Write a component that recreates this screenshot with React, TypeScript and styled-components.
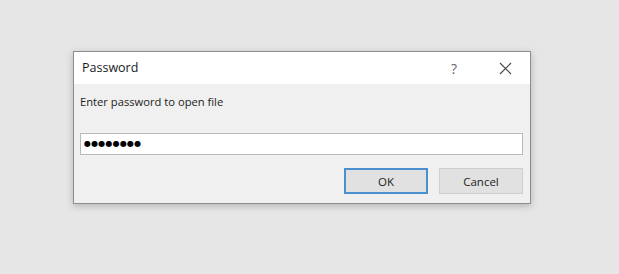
import styled, { createGlobalStyle } from "styled-components";

const GlobalStyle = createGlobalStyle`
  html, body {
    margin: 0;
    padding: 0;
    background: #e6e6e6;
    font-family: "Open Sans", "Noto Sans", Arial, sans-serif;
  }
`;

const Page = styled.div`
  width: 619px;
  height: 274px;
  padding: 51px 0 0 73px;
  box-sizing: border-box;
`;

const Dialog = styled.div`
  width: 458px;
  height: 153px;
  box-sizing: border-box;
  border: 1px solid #8e8e8e;
  background: #f0f0f0;
  box-shadow: 0 2px 7px rgba(0, 0, 0, 0.22);
  display: flex;
  flex-direction: column;
`;

const TitleBar = styled.div`
  height: 32px;
  background: #ffffff;
  display: flex;
  align-items: center;
  padding-left: 8px;
`;

const Title = styled.span`
  flex: 1;
  font-size: 12.5px;
  color: #1a1a1a;
  margin-bottom: 1px;
`;

const TitleButton = styled.button<{ $w: number }>`
  width: ${(p) => p.$w}px;
  height: 32px;
  border: none;
  background: transparent;
  padding: 0;
  display: flex;
  align-items: center;
  justify-content: center;
  color: #666;
  font-family: inherit;
  font-size: 14px;
`;

const Body = styled.div`
  flex: 1;
  padding: 10px 7px 0 6px;
  display: flex;
  flex-direction: column;
`;

const Label = styled.div`
  font-size: 11.2px;
  color: #222;
  height: 16px;
  line-height: 16px;
`;

const Field = styled.div`
  margin-top: 23px;
  height: 22px;
  box-sizing: border-box;
  border: 1px solid #b9b9b9;
  background: #fff;
  display: flex;
  align-items: center;
  padding-left: 3px;
`;

const Dots = styled.span`
  font-family: "DejaVu Sans", sans-serif;
  font-size: 8px;
  letter-spacing: 0.2px;
  color: #000;
  line-height: 1;
`;

const Buttons = styled.div`
  margin-top: 13px;
  display: flex;
  justify-content: flex-end;
  gap: 11px;
`;

const Button = styled.button<{ $primary?: boolean }>`
  width: 84px;
  height: 26px;
  box-sizing: border-box;
  border: ${(p) => (p.$primary ? "2px solid #4a90d0" : "1px solid #cfcfcf")};
  background: #e1e1e1;
  font-family: inherit;
  font-size: 11.5px;
  color: #222;
  padding: 0;
`;

export default function App() {
  return (
    <>
      <GlobalStyle />
      <Page>
        <Dialog>
          <TitleBar>
            <Title>Password</Title>
            <TitleButton $w={52} aria-label="Help">?</TitleButton>
            <TitleButton $w={50} aria-label="Close">
              <svg width="13" height="13" viewBox="0 0 13 13">
                <path d="M1 1L12 12M12 1L1 12" stroke="#444" strokeWidth="1.1" />
              </svg>
            </TitleButton>
          </TitleBar>
          <Body>
            <Label>Enter password to open file</Label>
            <Field>
              <Dots>●●●●●●●●</Dots>
            </Field>
            <Buttons>
              <Button $primary>OK</Button>
              <Button>Cancel</Button>
            </Buttons>
          </Body>
        </Dialog>
      </Page>
    </>
  );
}
